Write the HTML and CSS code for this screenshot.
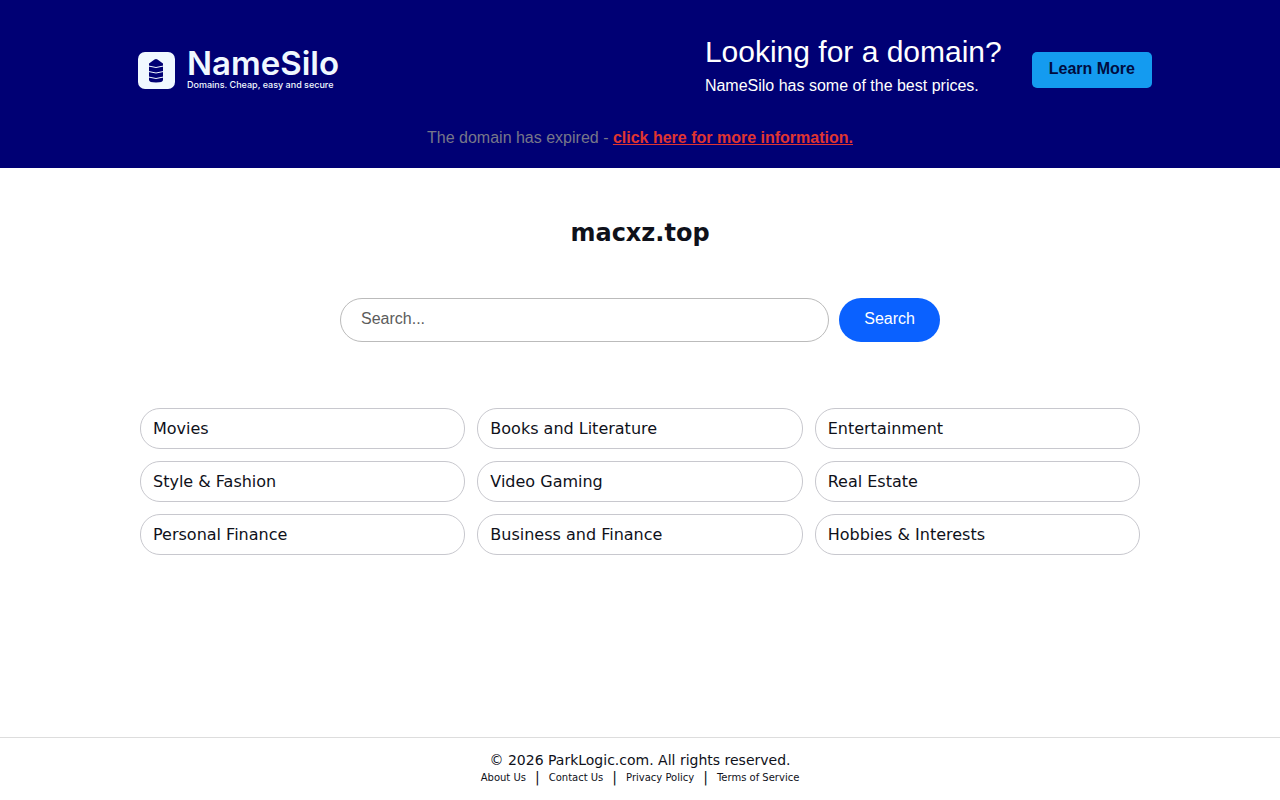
FILE: index.html
```html
<!DOCTYPE html>
<html lang="en">

<head>
    <meta charset="UTF-8">
    <meta name="viewport" content="width=device-width, initial-scale=1.0">
    <title>macxz.top</title>
    <link rel="stylesheet" href="styles.css">
</head>

<body>
    <header class="banner">
        <div class="banner-row">
            <a class="logo" href="/">
                <svg class="logo-icon" viewBox="0 0 37 37" aria-hidden="true">
                    <rect width="37" height="37" rx="7" fill="#f0f8ff" />
                    <path d="M11 11.500 L16.500 7.500 Q18 6.400 19.500 7.500 L25 11.500 V28 Q25 30.500 18 30.500 Q11 30.500 11 28 Z" fill="#000074" />
                    <path d="M10.500 14 Q18 17 25.500 14 M10.500 19.500 Q18 22.500 25.500 19.500 M10.500 25 Q18 28 25.500 25" fill="none" stroke="#f0f8ff" stroke-width="1" />
                </svg>
                <span class="logo-text">
                    <span class="logo-name">NameSilo</span>
                    <span class="logo-tag">Domains. Cheap, easy and secure</span>
                </span>
            </a>
            <div class="promo">
                <div class="promo-text">
                    <h2>Looking for a domain?</h2>
                    <p>NameSilo has some of the best prices.</p>
                </div>
                <a class="learn" href="/">Learn More</a>
            </div>
        </div>
        <p class="expired">The domain has expired - <a href="/">click here for more information.</a></p>
    </header>

    <main class="content">
        <h1>macxz.top</h1>

        <form class="search" action="/" method="get">
            <input type="text" name="q" id="q" placeholder="Search..." aria-label="Search">
            <button class="btn">Search</button>
        </form>

        <ul class="topics">
            <li><a href="/">Movies</a></li>
            <li><a href="/">Books and Literature</a></li>
            <li><a href="/">Entertainment</a></li>
            <li><a href="/">Style &amp; Fashion</a></li>
            <li><a href="/">Video Gaming</a></li>
            <li><a href="/">Real Estate</a></li>
            <li><a href="/">Personal Finance</a></li>
            <li><a href="/">Business and Finance</a></li>
            <li><a href="/">Hobbies &amp; Interests</a></li>
        </ul>
    </main>

    <footer class="footer">
        <p>© 2026 ParkLogic.com. All rights reserved.</p>
        <nav class="footer-links">
            <a href="/">About Us</a>
            <span>|</span>
            <a href="/">Contact Us</a>
            <span>|</span>
            <a href="/">Privacy Policy</a>
            <span>|</span>
            <a href="/">Terms of Service</a>
        </nav>
    </footer>
</body>

</html>
```
FILE: styles.css
```css
* {
    box-sizing: border-box;
    margin: 0;
    padding: 0;
}

body {
    display: flex;
    flex-direction: column;
    min-height: 100vh;
    font-family: "DejaVu Sans", sans-serif;
    font-size: 16px;
    color: #0f111a;
    background: #fff;
}

a {
    color: inherit;
    text-decoration: none;
}

/* top banner */
.banner {
    padding: 30px 10% 18px;
    font-family: "Liberation Sans", Arial, sans-serif;
    line-height: 24px;
    color: #fff;
    background: #000074;
}

.banner-row {
    display: flex;
    flex-wrap: wrap;
    align-items: center;
    justify-content: space-between;
    padding-left: 10px;
}

.logo {
    display: flex;
    align-items: center;
    gap: 12px;
    font-family: Inter, sans-serif;
    color: #f0f8ff;
}

.logo-icon {
    width: 37px;
    height: 37px;
}

.logo-text {
    display: flex;
    flex-direction: column;
    gap: 2px;
}

.logo-name {
    font-size: 33px;
    font-weight: 600;
    line-height: 28px;
}

.logo-tag {
    font-size: 9px;
    font-weight: 500;
    line-height: 12px;
}

.promo {
    display: flex;
    align-items: center;
    gap: 30px;
}

.promo-text {
    padding-bottom: 12px;
}

.promo-text h2 {
    font-size: 30px;
    font-weight: normal;
    line-height: 44px;
}

.learn {
    padding: 5px 17px 7px;
    font-weight: bold;
    color: #000c40;
    background: #149bf0;
    border-radius: 5px;
}

.expired {
    margin-top: 16px;
    text-align: center;
    color: #777789;
}

.expired a {
    font-weight: bold;
    color: #e03531;
    text-decoration: underline;
}

/* search + topics */
.content {
    flex: 1;
    width: 100%;
    max-width: 1040px;
    margin: 0 auto;
    padding: 50px 20px;
}

h1 {
    font-size: 24px;
    line-height: 30px;
    text-align: center;
}

.search {
    display: flex;
    gap: 10px;
    max-width: 600px;
    margin: 50px auto 66px;
}

.search input,
.btn {
    height: 44px;
    padding: 0 20px 2px;
    font-family: "Liberation Sans", Arial, sans-serif;
    font-size: 16px;
    border: 1px solid #bbb;
    border-radius: 22px;
}

.search input {
    flex: 1;
    min-width: 0;
    color: #0f111a;
    background: #fff;
}

.search input::placeholder {
    color: #5c5c5c;
}

.search .btn {
    padding: 0 25px 2px;
    color: #fff;
    background: #0a61ff;
    border: none;
    cursor: pointer;
}

.topics {
    display: grid;
    grid-template-columns: repeat(3, 1fr);
    gap: 12px;
    list-style: none;
}

.topics a {
    display: block;
    padding: 10px 12px;
    line-height: 19px;
    border: 1px solid #c8c8ce;
    border-radius: 20px;
}

/* footer */
.footer {
    padding: 14px 20px;
    text-align: center;
    border-top: 1px solid #ddd;
}

.footer p {
    font-size: 14px;
    line-height: 17px;
}

.footer-links {
    display: flex;
    justify-content: center;
    gap: 9px;
    font-size: 10px;
    line-height: 17px;
}

.footer-links span {
    font-size: 14px;
}
```
